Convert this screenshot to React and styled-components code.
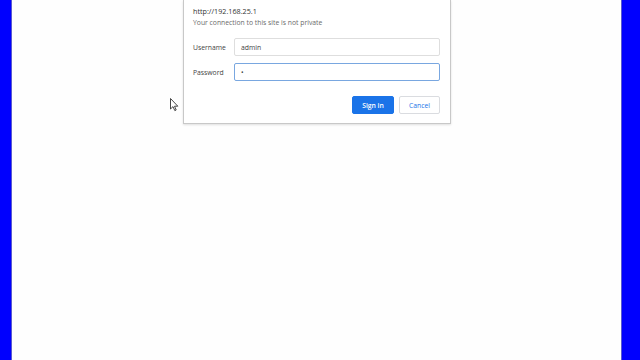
import React from 'react'
import styled, { createGlobalStyle } from 'styled-components'

const Global = createGlobalStyle`
  html, body { margin: 0; padding: 0; }
  body {
    width: 640px;
    height: 360px;
    overflow: hidden;
    background: #fff;
    font-family: "Open Sans", "Noto Sans", sans-serif;
  }
`

const Screen = styled.div`
  display: flex;
  width: 640px;
  height: 360px;
  position: relative;
`

const Bar = styled.div`
  width: ${props => props.w}px;
  background: #0000fe;
  border-${props => props.side}: 1px solid #5a5ad0;
  box-sizing: border-box;
  flex-shrink: 0;
`

const Desktop = styled.div`
  flex: 1;
  background: #fefefe;
  padding-left: 171px;
`

const Dialog = styled.div`
  width: 268px;
  background: #fff;
  border: 1px solid #c8c8c8;
  border-top: none;
  box-shadow: 0 1px 2px rgba(0, 0, 0, 0.12);
  padding: 6px 10px 9px 9px;
  box-sizing: border-box;
  color: #333;
`

const Url = styled.div`
  font-size: 7.2px;
  line-height: 11px;
  color: #333;
`

const Note = styled.div`
  font-size: 6.8px;
  line-height: 11px;
  color: #6b6b6b;
  margin-bottom: 10px;
`

const Row = styled.div`
  display: flex;
  align-items: center;
  height: 18px;
  margin-bottom: 7px;
`

const Label = styled.div`
  width: 41px;
  font-size: 6.8px;
  color: #444;
`

const Field = styled.div`
  flex: 1;
  height: 18px;
  box-sizing: border-box;
  border: 1px solid ${props => props.focused ? '#79a7e0' : '#dedede'};
  border-radius: 2px;
  padding-left: 6px;
  display: flex;
  align-items: center;
  font-size: 6.8px;
  color: #444;
`

const Buttons = styled.div`
  display: flex;
  justify-content: flex-end;
  gap: 5px;
  margin-top: 15px;
`

const Button = styled.div`
  height: 18px;
  width: ${props => props.w}px;
  box-sizing: border-box;
  border-radius: 2px;
  display: flex;
  align-items: center;
  justify-content: center;
  font-size: 6.8px;
  font-weight: ${props => props.primary ? 600 : 400};
  background: ${props => props.primary ? '#1a73e8' : '#fff'};
  color: ${props => props.primary ? '#fff' : '#1a73e8'};
  border: 1px solid ${props => props.primary ? '#1a73e8' : '#dadce0'};
`

const Cursor = styled.svg`
  position: absolute;
  left: 170px;
  top: 98px;
`

export default function App() {
  return (
    <Screen>
      <Global />
      <Bar w={12} side="right" />
      <Desktop>
        <Dialog>
          <Url>http://192.168.25.1</Url>
          <Note>Your connection to this site is not private</Note>
          <Row>
            <Label>Username</Label>
            <Field>admin</Field>
          </Row>
          <Row>
            <Label>Password</Label>
            <Field focused>•</Field>
          </Row>
          <Buttons>
            <Button primary w={42}>Sign in</Button>
            <Button w={41}>Cancel</Button>
          </Buttons>
        </Dialog>
      </Desktop>
      <Bar w={19} side="left" />
      <Cursor width="9" height="14" viewBox="0 0 9 14">
        <path d="M0.5 0.5 L0.5 11 L3 8.6 L4.8 12.6 L6.2 12 L4.5 8.2 L7.8 8.2 Z" fill="#fff" stroke="#333" strokeWidth="0.9" />
      </Cursor>
    </Screen>
  )
}
